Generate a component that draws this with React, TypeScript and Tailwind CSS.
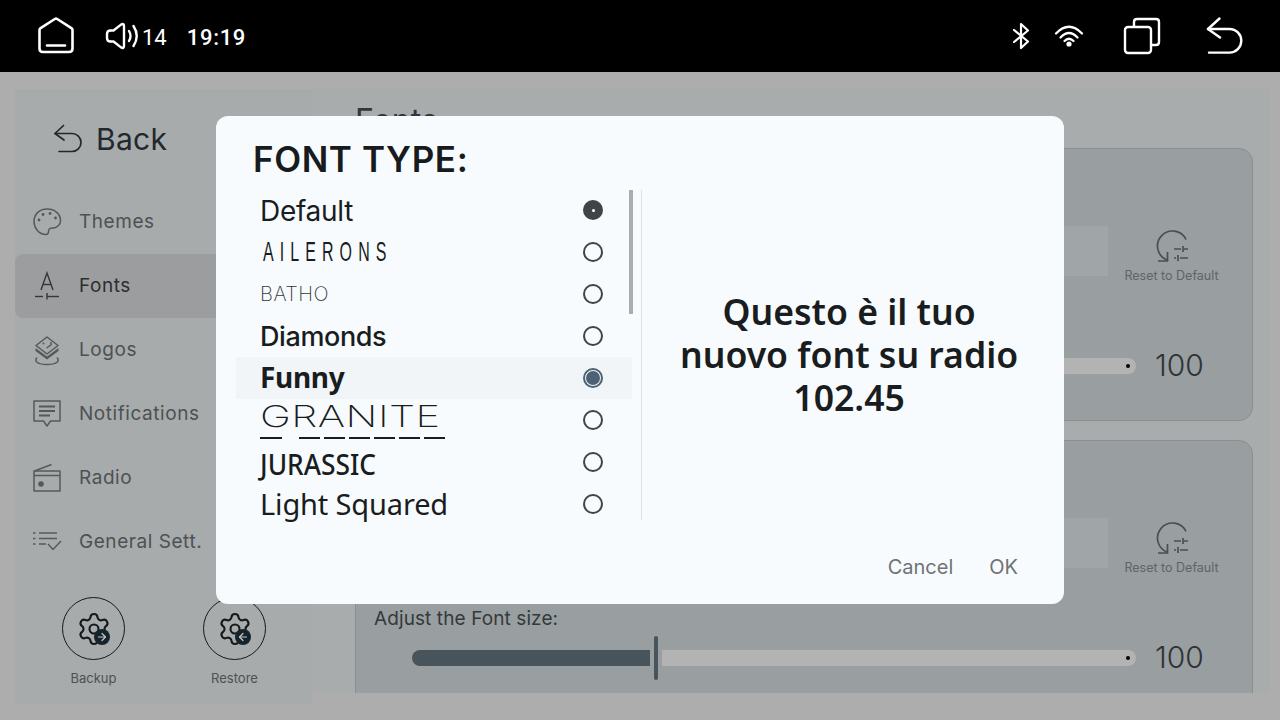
import { Settings, ArrowRight, ArrowLeft } from "lucide-react";

const ui = "font-['Inter','Liberation_Sans',sans-serif]";

function HomeIcon() {
  return (
    <svg width="38" height="38" viewBox="37 18 38 38" fill="none" stroke="#fff" strokeWidth="2.6" strokeLinejoin="round" strokeLinecap="round">
      <path d="M39.5 31 Q39.5 29.8 40.6 29.1 L54.8 20 Q56 19.3 57.2 20 L71.4 29.1 Q72.5 29.8 72.5 31 V49.5 Q72.5 53 69 53 H43 Q39.5 53 39.5 49.5 Z" />
      <path d="M47 46.5 H65" />
    </svg>
  );
}

function VolumeIcon() {
  return (
    <svg width="34" height="28" viewBox="105 22 34 28" fill="none" stroke="#fff" strokeWidth="2.4" strokeLinejoin="round" strokeLinecap="round">
      <path d="M107 34 Q107 30.5 110.5 30.5 H113.5 L121 24.6 Q124 23 124 26 V46 Q124 49 121 47.4 L113.5 41.5 H110.5 Q107 41.5 107 38 Z" />
      <path d="M129 31 Q132 36 129 41" />
      <path d="M133.5 26 Q140 36 133.5 46" />
    </svg>
  );
}

function StatusIcons() {
  return (
    <div className="flex items-center">
      <svg width="18" height="28" viewBox="1012 22 18 28" fill="none" stroke="#fff" strokeWidth="2.2" strokeLinejoin="round" strokeLinecap="round">
        <path d="M1014 30 L1028 41.5 L1021 48 V24 L1028 30.5 L1014 42" />
      </svg>
      <svg className="ml-[24px]" width="30" height="26" viewBox="1054 24 30 26" fill="none" stroke="#fff" strokeWidth="2.3" strokeLinecap="round">
        <path d="M1056 34.5 Q1069 21 1082 34.5" />
        <path d="M1060.5 38.5 Q1069 29.5 1077.5 38.5" />
        <path d="M1064.5 42 Q1069 37.5 1073.5 42" />
        <circle cx="1069" cy="45" r="2.6" fill="#fff" stroke="none" />
      </svg>
      <svg className="ml-[39px]" width="38" height="38" viewBox="1123 17 38 38" fill="none" stroke="#fff" strokeWidth="2.4" strokeLinejoin="round" strokeLinecap="round">
        <rect x="1125" y="27" width="26" height="26" rx="3" />
        <path d="M1134 26 V22 Q1134 19 1137 19 H1156 Q1159 19 1159 22 V42 Q1159 45 1156 45 H1152" />
      </svg>
      <svg className="ml-[45px]" width="38" height="38" viewBox="1206 17 38 38" fill="none" stroke="#fff" strokeWidth="2.4" strokeLinejoin="round" strokeLinecap="round">
        <path d="M1219.5 18.5 L1208 29 L1220 37.5" />
        <path d="M1208 29 H1229.5 A11.8 11.8 0 0 1 1229.5 52.6 H1209" />
      </svg>
    </div>
  );
}

function BackArrow() {
  return (
    <svg width="30" height="30" viewBox="52 124 30 30" fill="none" stroke="#22282b" strokeWidth="1.7" strokeLinejoin="round" strokeLinecap="round">
      <path d="M62.5 125.5 L54 133.5 L63 140" />
      <path d="M54 133.5 H71 A9 9 0 0 1 71 151.5 H58" />
    </svg>
  );
}

function PaletteIcon() {
  return (
    <svg width="30" height="30" viewBox="32 206 30 30" fill="none" stroke="#55595c" strokeWidth="1.5" strokeLinejoin="round">
      <path d="M47 208 C39 208 34 213.5 34 220.5 C34 227 39 233.5 46 233.5 C49.5 233.5 48 230 49 228.5 C50 226.5 53 227.5 55.5 226.5 C59 225 60.5 222 60.5 219.5 C60.5 213 55 208 47 208 Z" />
      <circle cx="39" cy="219" r="1.4" fill="#55595c" stroke="none" />
      <circle cx="43" cy="213.5" r="1.4" fill="#55595c" stroke="none" />
      <circle cx="50" cy="212.5" r="1.4" fill="#55595c" stroke="none" />
      <circle cx="55.5" cy="217" r="1.4" fill="#55595c" stroke="none" />
    </svg>
  );
}

function FontsIcon() {
  return (
    <svg width="30" height="30" viewBox="32 270 30 30" fill="none" stroke="#33373a" strokeWidth="1.4">
      <path d="M41 289 L47 272 L53 289" />
      <path d="M43 283.5 H51" />
      <path d="M35 295.5 H43" />
      <path d="M47 295.5 H59" />
      <path d="M47 292 V298.5" />
    </svg>
  );
}

function LogosIcon() {
  return (
    <svg width="30" height="32" viewBox="32 332 30 32" fill="none" stroke="#55595c" strokeWidth="1.5" strokeLinejoin="round">
      <path d="M47 335 L58 343.5 L47 352 L36 343.5 Z" />
      <path d="M35.5 346 V349 L47 357.5 L58.5 349 V346 L47 354.5 Z" fill="#55595c" stroke="none" />
      <path d="M37 355.5 C33.5 359.5 38 362.5 47 362.5 C56 362.5 60.5 359.5 57 355.5" />
      <circle cx="43.5" cy="341.5" r="1" fill="#55595c" stroke="none" />
      <path d="M51 340 V343 L46.5 346" />
    </svg>
  );
}

function NotifyIcon() {
  return (
    <svg width="30" height="30" viewBox="32 398 30 30" fill="none" stroke="#55595c" strokeWidth="1.5" strokeLinejoin="round">
      <path d="M34 400 H60 V420 H50.5 L47 425 L43.5 420 H34 Z" />
      <path d="M39 405.5 H55 M39 410 H55 M39 414.5 H50" strokeWidth="1.8" />
    </svg>
  );
}

function RadioIcon() {
  return (
    <svg width="30" height="30" viewBox="32 462 30 30" fill="none" stroke="#55595c" strokeWidth="1.5" strokeLinejoin="round">
      <rect x="34" y="470" width="26" height="20" />
      <path d="M34.5 470 L51.5 463.5" />
      <path d="M34 474.5 H60" />
      <circle cx="41" cy="483" r="2.8" fill="#55595c" stroke="none" />
    </svg>
  );
}

function GeneralIcon() {
  return (
    <svg width="30" height="24" viewBox="32 531 30 24" fill="none" stroke="#55595c" strokeWidth="1.5">
      <path d="M33 534 H35.5 M33 539.5 H35.5 M33 545 H35.5" />
      <path d="M39 534 H57 M39 539.5 H57 M39 545 H46" />
      <path d="M48 545 L53 550.5 L61 542" />
    </svg>
  );
}

function ResetIcon() {
  return (
    <svg width="34" height="34" viewBox="1154 229 34 34" fill="none" stroke="#4a4f52" strokeWidth="1.7">
      <path d="M1185 239.5 A15 15 0 1 0 1166 260" />
      <path d="M1166.5 252 V261 H1157" />
      <path d="M1173 249 H1180 M1183 249 H1187 M1182 246 V252" />
      <path d="M1173 258 H1175 M1179 258 H1187 M1177 255 V261" />
    </svg>
  );
}

function SideItem({ label, icon, active }: { label: string; icon: React.ReactNode; active?: boolean }) {
  return (
    <div className={`flex h-[64px] items-center rounded-l-lg ${active ? "bg-[#9c9d9e] text-[#2b2f31]" : "text-[#4d5153]"}`}>
      <div className="flex w-[64px] justify-center">{icon}</div>
      <span className={`${ui} text-[19px] tracking-[0.55px]`}>{label}</span>
    </div>
  );
}

function GearButton({ label, dir }: { label: string; dir: "in" | "out" }) {
  return (
    <div className="flex w-[63px] flex-col items-center">
      <div className="relative flex h-[63px] w-[63px] items-center justify-center rounded-full border-[1.5px] border-[#15191b]">
        <Settings size={36} strokeWidth={1.4} color="#15191b" />
        <div className="absolute left-[31px] top-[31px] flex h-[16px] w-[16px] items-center justify-center rounded-full bg-[#15242c]">
          {dir === "out" ? <ArrowRight size={12} color="#c6c9ca" strokeWidth={2.4} /> : <ArrowLeft size={12} color="#c6c9ca" strokeWidth={2.4} />}
        </div>
      </div>
      <span className={`${ui} mt-[9px] text-[13px] text-[#4d5153]`}>{label}</span>
    </div>
  );
}

function FontCard() {
  return (
    <section className="h-[273px] w-[898px] shrink-0 rounded-[14px] border border-[#8b8f92] bg-[#999ea0] pl-[18px] pr-[18px]">
      <div className="mt-[77px] flex items-start">
        <div className="h-[50px] w-[734px] bg-[#a0a5a8]" />
        <div className="ml-[15px] flex w-[97px] flex-col items-center">
          <div className="mt-[3px]">
            <ResetIcon />
          </div>
          <span className={`${ui} mt-[4px] whitespace-nowrap text-[12.5px] text-[#5f6466]`}>Reset to Default</span>
        </div>
      </div>
      <p className={`${ui} mt-[29px] text-[19px] leading-[24px] tracking-[0.1px] text-[#34393b]`}>Adjust the Font size:</p>
      <div className="mt-[5px] flex h-[44px] items-center pl-[38px]">
        <div className="h-[16px] w-[238px] rounded-l-lg bg-[#47545b]" />
        <div className="ml-[4px] h-[44px] w-[4px] rounded-sm bg-[#47545b]" />
        <div className="relative ml-[4px] h-[16px] w-[474px] rounded-r-lg bg-[#b3b3b3]">
          <div className="absolute right-[6px] top-[6px] h-[4px] w-[4px] rounded-full bg-black" />
        </div>
        <span className={`${ui} ml-[19px] text-[30px] font-light text-[#2e3336]`}>100</span>
      </div>
    </section>
  );
}

function FontRow({ active, selected, children }: { active?: boolean; selected?: boolean; children: React.ReactNode }) {
  return (
    <div className={`flex h-[42px] w-[396px] items-center justify-between pl-[24px] pr-[29px] ${selected ? "bg-[#f2f5f7]" : ""}`}>
      <div className="min-w-0">{children}</div>
      {active ? (
        <div className="flex h-[20px] w-[20px] items-center justify-center rounded-full bg-[#3f4449]">
          <div className="h-[3px] w-[3px] rounded-full bg-white" />
        </div>
      ) : selected ? (
        <div className="flex h-[20px] w-[20px] items-center justify-center rounded-full border-2 border-[#4d6175]">
          <div className="h-[14px] w-[14px] rounded-full bg-[#4d6175]" />
        </div>
      ) : (
        <div className="h-[20px] w-[20px] rounded-full border-2 border-[#3f4449]" />
      )}
    </div>
  );
}

export default function App() {
  return (
    <div className="relative h-[720px] w-[1280px] overflow-hidden bg-[#adadad]">
      <header className="flex h-[72px] items-center justify-between bg-black pl-[37px] pr-[36px] text-white">
        <div className="flex items-center font-['Roboto',sans-serif]">
          <HomeIcon />
          <div className="ml-[30px]">
            <VolumeIcon />
          </div>
          <span className="ml-[3px] mt-[2px] text-[22px]">14</span>
          <span className="ml-[20px] mt-[2px] text-[22px] font-medium tracking-[0.7px]">19:19</span>
        </div>
        <StatusIcons />
      </header>

      <div className="flex h-[632px] pl-[15px] pt-[17px]">
        <aside className="flex h-[615px] w-[297px] shrink-0 flex-col bg-[#a7abab]">
          <div className="flex h-[101px] shrink-0 items-center pb-[1px] pl-[38px]">
            <BackArrow />
            <span className={`${ui} ml-[13px] text-[30px] tracking-[0.3px] text-[#22282b]`}>Back</span>
          </div>
          <div className="flex flex-col">
            <SideItem label="Themes" icon={<PaletteIcon />} />
            <SideItem label="Fonts" icon={<FontsIcon />} active />
            <SideItem label="Logos" icon={<LogosIcon />} />
            <SideItem label="Notifications" icon={<NotifyIcon />} />
            <SideItem label="Radio" icon={<RadioIcon />} />
            <SideItem label="General Sett." icon={<GeneralIcon />} />
          </div>
          <div className="mt-[23px] flex gap-[78px] pl-[47px]">
            <GearButton label="Backup" dir="out" />
            <GearButton label="Restore" dir="in" />
          </div>
        </aside>
        <main className="flex h-[604px] w-[958px] shrink-0 flex-col overflow-hidden bg-[#a8acac] pl-[43px]">
          <h1 className={`${ui} mt-[12px] h-[47px] shrink-0 text-[32px] leading-[40px] text-[#33373a]`}>Fonts</h1>
          <div className="flex shrink-0 flex-col gap-[19px]">
            <FontCard />
            <FontCard />
          </div>
        </main>
      </div>

      <div className="absolute left-[216px] top-[116px] flex h-[488px] w-[848px] flex-col rounded-[12px] bg-[#f7fbfe] text-[#191d20]">
        <h2 className={`${ui} pl-[37px] pt-[20px] text-[35px] font-semibold leading-[46px] tracking-[0.6px] text-[#171b1e]`}>FONT TYPE:</h2>
        <div className="relative mt-[8px] flex h-[330px] pl-[20px]">
          <div className="h-[332px] w-[405px] shrink-0 overflow-hidden">
            <div className="-mt-[1px]">
              <FontRow active>
                <span className="font-['Inter',sans-serif] block pt-[2px] text-[28px] leading-[40px] tracking-[-0.3px]">Default</span>
              </FontRow>
              <FontRow>
                <span className="font-['Liberation_Sans_Narrow','Liberation_Sans',sans-serif] ml-[3px] inline-block origin-left scale-x-[0.57] whitespace-nowrap text-[28px] leading-[42px] tracking-[10.7px]">AILERONS</span>
              </FontRow>
              <FontRow>
                <span className="font-['Inter',sans-serif] inline-block text-[20px] font-extralight leading-[42px] tracking-[0.5px] text-[#33373a] antialiased">BATHO</span>
              </FontRow>
              <FontRow>
                <span className="font-['Inter',sans-serif] block pt-[2px] text-[27px] font-medium leading-[40px] tracking-[-0.4px]">Diamonds</span>
              </FontRow>
              <FontRow selected>
                <span className="font-['Noto_Sans',sans-serif] block pb-[2px] text-[28px] font-bold leading-[38px] tracking-[-0.3px]">Funny</span>
              </FontRow>
              <div className="relative">
                <FontRow>
                  <span className="font-['Inter',sans-serif] mb-[7px] block origin-left scale-x-[1.39] text-[30px] font-extralight leading-[35px] tracking-[0.3px] antialiased">GRANITE</span>
                </FontRow>
                <div className="absolute left-[24px] top-[38px] flex h-[2px] w-[185px]">
                  <div className="mr-[17px] w-[22px] bg-[#191d20]" />
                  <div className="flex flex-1 gap-[4px]">
                    <div className="flex-1 bg-[#191d20]" />
                    <div className="flex-1 bg-[#191d20]" />
                    <div className="flex-1 bg-[#191d20]" />
                    <div className="flex-1 bg-[#191d20]" />
                    <div className="flex-1 bg-[#191d20]" />
                    <div className="flex-1 bg-[#191d20]" />
                  </div>
                </div>
              </div>
              <FontRow>
                <span className="font-['Noto_Sans',sans-serif] block origin-left scale-x-[0.94] pt-[4px] text-[28px] font-medium leading-[34px]">JURASSIC</span>
              </FontRow>
              <FontRow>
                <span className="font-['Noto_Sans',sans-serif] text-[29px] leading-[34px] tracking-[-0.15px]">Light Squared</span>
              </FontRow>
            </div>
          </div>
          <div className="absolute left-[413px] top-0 h-[124px] w-[4px] bg-[#a8adae]" />
          <div className="h-[330px] w-px shrink-0 bg-[#dce0e2]" />
          <div className="flex flex-1 items-center justify-center pb-[2px] pl-[38px] pr-[46px]">
            <p className="font-['Noto_Sans',sans-serif] whitespace-nowrap text-center text-[35.6px] font-semibold text-[#191d20]">
              <span className="block h-[43px] leading-[43px]">Questo è il tuo</span>
              <span className="block h-[43px] leading-[43px]">nuovo font su radio</span>
              <span className="block h-[43px] leading-[43px]">102.45</span>
            </p>
          </div>
        </div>
        <div className={`${ui} mt-[33px] flex justify-end gap-[36px] pr-[46px] text-[20px] leading-[28px] text-[#6f7375]`}>
          <span>Cancel</span>
          <span>OK</span>
        </div>
      </div>
    </div>
  );
}
